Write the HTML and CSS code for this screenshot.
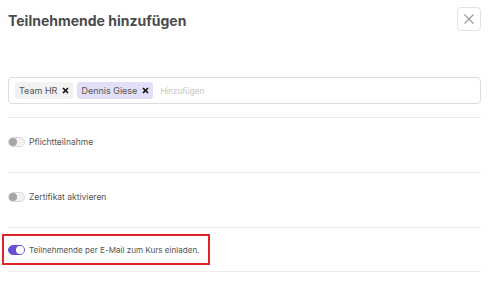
FILE: index.html
```html
<!DOCTYPE html>
<html lang="de">
<head>
<meta charset="utf-8">
<link rel="stylesheet" href="styles.css">
</head>
<body>
<div class="dialog">
  <div class="header">
    <h1 class="title">Teilnehmende hinzufügen</h1>
    <button class="close" aria-label="Schließen">
      <svg width="12" height="12" viewBox="0 0 12 12"><path d="M1.5 1.5L10.5 10.5M10.5 1.5L1.5 10.5" stroke="#9a9a9a" stroke-width="1.1" fill="none"/></svg>
    </button>
  </div>
  <div class="section section-input">
    <div class="tag-input">
      <span class="chip chip-gray">Team HR<svg class="chip-x" width="7" height="7" viewBox="0 0 7 7"><path d="M1 1L6 6M6 1L1 6" stroke="#111" stroke-width="1.7"/></svg></span>
      <span class="chip chip-blue">Dennis Giese<svg class="chip-x" width="7" height="7" viewBox="0 0 7 7"><path d="M1 1L6 6M6 1L1 6" stroke="#111" stroke-width="1.7"/></svg></span>
      <span class="placeholder">Hinzufügen</span>
    </div>
  </div>
  <div class="section section-opt">
    <div class="opt">
      <span class="toggle"><span class="knob"></span></span>
      <span class="label">Pflichtteilnahme</span>
    </div>
  </div>
  <div class="section section-opt">
    <div class="opt">
      <span class="toggle"><span class="knob"></span></span>
      <span class="label">Zertifikat aktivieren</span>
    </div>
  </div>
  <div class="section section-last">
    <div class="opt highlight">
      <span class="toggle on"><span class="knob"></span></span>
      <span class="label label-long">Teilnehmende per E-Mail zum Kurs einladen.</span>
    </div>
  </div>
</div>
</body>
</html>
```
FILE: styles.css
```css
* { box-sizing: border-box; }
html, body { margin: 0; padding: 0; background: #fff; }
body {
  font-family: Inter, "Noto Sans", sans-serif;
  color: #555;
}
.dialog {
  width: 473px;
  margin-left: 8px;
}
.header {
  display: flex;
  justify-content: space-between;
  align-items: flex-start;
  padding-top: 7px;
  height: 77px;
}
.title {
  margin: 4px 0 0 0;
  font-size: 14px;
  line-height: 20px;
  font-weight: 700;
  color: #4b4b4b;
}
.close {
  width: 24px;
  height: 24px;
  border: 1px solid #e2e2e2;
  border-radius: 4px;
  background: #fff;
  padding: 0;
  display: flex;
  align-items: center;
  justify-content: center;
}
.section {
  border-bottom: 1px solid #ececec;
}
.section-input {
  padding-bottom: 13px;
}
.tag-input {
  height: 27px;
  border: 1px solid #dcdcdc;
  border-radius: 4px;
  display: flex;
  align-items: center;
  gap: 4px;
  padding-left: 6px;
}
.chip {
  display: inline-flex;
  align-items: center;
  height: 17px;
  padding: 0 4px;
  border-radius: 3px;
  font-size: 9px;
  color: #555;
  gap: 5px;
}
.chip-gray { background: #f2f2f2; }
.chip-blue { background: #e1e0f8; }
.chip-x { display: block; }
.placeholder {
  margin-left: 3px;
  font-size: 8px;
  color: #c4c4c4;
}
.section-opt {
  height: 55px;
  padding-top: 17px;
}
.section-last {
  height: 44px;
  padding-top: 6px;
}
.opt {
  display: flex;
  align-items: center;
  gap: 4px;
  height: 14px;
}
.label {
  font-size: 8.5px;
  color: #555;
  white-space: nowrap;
}
.label-long {
  font-size: 8.1px;
}
.toggle {
  position: relative;
  flex: none;
  width: 17px;
  height: 10px;
  border-radius: 5px;
  background: #f3f3f3;
  border: 1px solid #d8d8d8;
  display: inline-block;
}
.toggle .knob {
  position: absolute;
  top: 0px;
  left: 0px;
  width: 8px;
  height: 8px;
  border-radius: 50%;
  background: #a6a6a6;
}
.toggle.on {
  background: #6a4fd6;
  border-color: #6a4fd6;
}
.toggle.on .knob {
  left: auto;
  right: 0px;
  background: #fff;
}
.opt.highlight {
  height: 31px;
  width: 208px;
  margin-left: -6px;
  padding-left: 4px;
  border: 2px solid #e02424;
}
```
